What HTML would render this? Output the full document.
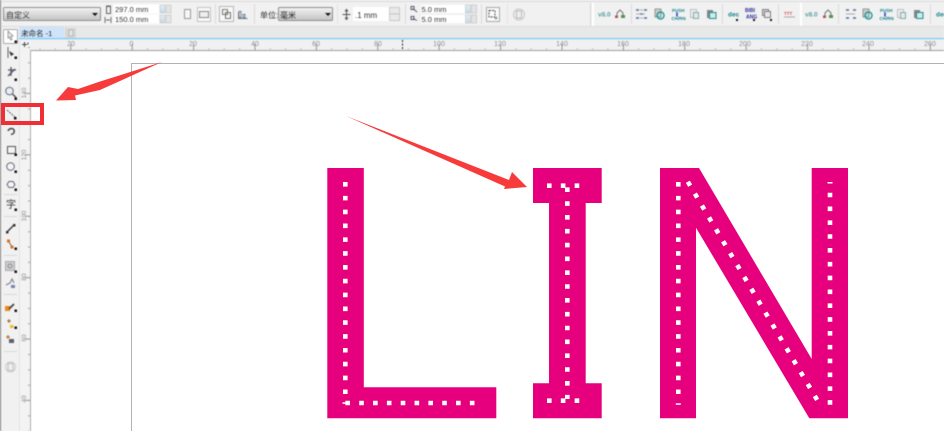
<!DOCTYPE html>
<html><head><meta charset="utf-8">
<style>
html,body{margin:0;padding:0;width:944px;height:431px;overflow:hidden;background:#fff}
svg{display:block;font-family:"Liberation Sans","Noto Sans CJK SC",sans-serif}
</style></head>
<body>
<svg width="944" height="431" viewBox="0 0 944 431" xmlns="http://www.w3.org/2000/svg">
<defs>
<linearGradient id="dd" x1="0" y1="0" x2="0" y2="1"><stop offset="0" stop-color="#f4f4f4"/><stop offset="1" stop-color="#c2c2c2"/></linearGradient>
<linearGradient id="sp" x1="0" y1="0" x2="0" y2="1"><stop offset="0" stop-color="#e6eef4"/><stop offset="1" stop-color="#c9d6df"/></linearGradient>
<filter id="soft" filterUnits="userSpaceOnUse" x="0" y="0" width="944" height="431" color-interpolation-filters="sRGB"><feGaussianBlur stdDeviation="0.4"/></filter>
</defs>

<!-- canvas -->
<rect width="944" height="431" fill="#fff"/>

<!-- top toolbar -->
<rect width="944" height="50" fill="#f1f1f1"/>
<rect y="0" width="19" height="431" fill="#f1f1f1"/>
<rect x="19" y="39" width="12" height="392" fill="#f3f3f3"/>

<g filter="url(#soft)">
<rect y="1" width="944" height="1" fill="#dcdcdc"/>
<rect y="26" width="944" height="1" fill="#dedede"/>

<rect x="3.500" y="7.500" width="97" height="13" rx="1" fill="url(#dd)" stroke="#8e8e8e"/>
<text x="6" y="18" font-size="8" fill="#333">自定义</text>
<path d="M92 13h6l-3 3z" fill="#111"/>

<!-- page size -->
<path d="M106.500 6.500h4v7h-4zM106 6h5" fill="none" stroke="#666"/>
<path d="M105 17v6M111 17v6M106 20h4" fill="none" stroke="#666" stroke-width=".9"/>
<rect x="113" y="4" width="58" height="20" fill="#f8f8f8"/>
<rect x="114" y="5" width="45" height="8" fill="#fff"/>
<rect x="114" y="15" width="45" height="8" fill="#fff"/>
<text x="115" y="12" font-size="7.500" fill="#333">297.0 mm</text>
<text x="115" y="22" font-size="7.500" fill="#333">150.0 mm</text>
<rect x="160" y="5" width="5" height="8" fill="url(#sp)" stroke="#b5c0c8" stroke-width=".5"/>
<rect x="166" y="5" width="5" height="8" fill="#e4e4e4" stroke="#b5b5b5" stroke-width=".5"/>
<rect x="160" y="15" width="5" height="8" fill="url(#sp)" stroke="#b5c0c8" stroke-width=".5"/>
<rect x="166" y="15" width="5" height="8" fill="#e4e4e4" stroke="#b5b5b5" stroke-width=".5"/>

<rect x="184.500" y="9.500" width="6" height="9" fill="#f6f6f6" stroke="#9a9a9a"/>
<rect x="197.500" y="7.500" width="13" height="14" fill="#f8f8f8" stroke="#c4c4c4"/>
<rect x="199.500" y="11.500" width="9" height="6" fill="#eee" stroke="#8a8a8a"/>
<rect x="215" y="4" width="1" height="20" fill="#dcdcdc"/>
<rect x="219.500" y="6.500" width="14" height="15" fill="#f8f8f8" stroke="#b8b8b8"/>
<path d="M222.500 9.500h5v5h-5zM225.500 12.500h5v6h-5z" fill="#f4f4f4" stroke="#555" stroke-width=".8"/>
<path d="M238.500 12v6.500h9M239 11.500h2v6h-2zM243 14.500h2v3h-2z" fill="none" stroke="#6a7a8a" stroke-width=".9"/>
<rect x="254" y="4" width="1" height="20" fill="#dcdcdc"/>
<text x="260" y="18" font-size="8" fill="#333">单位:</text>
<rect x="278.500" y="7.500" width="54" height="13" rx="1" fill="url(#dd)" stroke="#8e8e8e"/>
<text x="280" y="18" font-size="8" fill="#222">毫米</text>
<path d="M325 13h6l-3 3z" fill="#111"/>
<rect x="337" y="4" width="1" height="20" fill="#e4e4e4"/>

<!-- nudge -->
<path d="M346.500 10v9M342.500 14.500h8M345 11.500l1.500-2 1.500 2M345 17.500l1.500 2 1.500-2" fill="none" stroke="#555" stroke-width="1"/>
<rect x="353" y="7" width="37" height="14" fill="#fff"/>
<text x="355" y="18" font-size="8" fill="#333">.1 mm</text>
<rect x="389.500" y="7.500" width="10" height="6.500" fill="#e9e9e9" stroke="#bbb" stroke-width=".7"/>
<rect x="389.500" y="14" width="10" height="6.500" fill="#e9e9e9" stroke="#bbb" stroke-width=".7"/>
<rect x="405" y="4" width="1" height="20" fill="#dcdcdc"/>
<path d="M411 6.500h3v3h-3zM413 8.500l4 3.500M411 16.500h3v3h-3zM413 18.500l4 2" fill="none" stroke="#556" stroke-width=".9"/>
<rect x="421" y="5" width="44" height="8" fill="#fff"/>
<rect x="421" y="15" width="44" height="8" fill="#fff"/>
<text x="421.500" y="12" font-size="7.500" fill="#333">5.0 mm</text>
<text x="421.500" y="22" font-size="7.500" fill="#333">5.0 mm</text>
<rect x="465.500" y="5" width="5" height="8" fill="url(#sp)" stroke="#b5c0c8" stroke-width=".5"/>
<rect x="471.500" y="5" width="5" height="8" fill="#e4e4e4" stroke="#b5b5b5" stroke-width=".5"/>
<rect x="465.500" y="15" width="5" height="8" fill="url(#sp)" stroke="#b5c0c8" stroke-width=".5"/>
<rect x="471.500" y="15" width="5" height="8" fill="#e4e4e4" stroke="#b5b5b5" stroke-width=".5"/>
<rect x="481" y="4" width="1" height="20" fill="#dcdcdc"/>
<rect x="486.500" y="7.500" width="13" height="14" fill="#fafafa" stroke="#aaa"/>
<path d="M489 10.500h6v6.500h-6z" fill="none" stroke="#445" stroke-width=".9" stroke-dasharray="2 1"/>
<circle cx="496" cy="18" r="1.500" fill="#8aa"/>
<rect x="507" y="4" width="1" height="20" fill="#e4e4e4"/>
<circle cx="519" cy="14.500" r="5.500" fill="#eee" stroke="#c6c6c6"/>
<path d="M516.500 11h5v7h-5z" fill="none" stroke="#bbb"/>

<!-- macro icons -->
<rect x="592" y="3" width="2" height="23" fill="#fff"/>
<rect x="590" y="3" width="1" height="23" fill="#d8d8d8"/>
<text x="598" y="16.500" font-size="6.500" font-weight="bold" fill="#2f8f8c" opacity=".8">v8.0</text>
<path d="M617 17v-4l3-3 3 3v4" fill="none" stroke="#777"/><rect x="621" y="15" width="4" height="3" fill="#5a8f55"/><rect x="615" y="15.500" width="3" height="2.500" fill="#a55"/>
<rect x="631" y="4" width="1" height="20" fill="#dcdcdc"/>
<path d="M636 10h3M644 10h3M636 18h3M644 18h3M640 14h3" stroke="#4a6fa8" stroke-width="1.400"/><path d="M636 14h9M640 10h3M640 18h3" stroke="#999" stroke-width=".8"/>
<rect x="655" y="9" width="6" height="8" fill="#ccc" stroke="#777" stroke-width=".7"/><circle cx="660.500" cy="15.500" r="3.500" fill="none" stroke="#1d9b9b" stroke-width="1.400"/>
<text x="672" y="12" font-size="4.500" font-weight="bold" fill="#16858c">PUSH</text><path d="M677 12.500v4" stroke="#2040b8" stroke-width="1.500"/><text x="671.500" y="20" font-size="4.500" font-weight="bold" fill="#16858c">CH/RN</text>
<rect x="690.500" y="9.500" width="6" height="8" fill="#eee" stroke="#aaa" stroke-width=".7"/><rect x="693.500" y="12.500" width="5" height="6" fill="#dcecec" stroke="#5b9090" stroke-width=".7"/>
<path d="M707 10h6v8h-6z" fill="#888"/><rect x="709.500" y="12.500" width="6.500" height="6" fill="#cfeaea" stroke="#1d8f8f"/>
<rect x="722" y="4" width="1" height="20" fill="#dcdcdc"/>
<text x="728" y="16.500" font-size="6.500" font-weight="bold" fill="#16858c">dec</text><rect x="736" y="19" width="2" height="2" fill="#111"/>
<text x="745" y="12" font-size="5" font-weight="bold" fill="#2a2f9c">BIBI</text><text x="746" y="18.500" font-size="5" font-weight="bold" fill="#2a2f9c">ANG</text><rect x="753" y="19" width="2" height="2" fill="#111"/>
<rect x="762.500" y="9.500" width="6" height="6" fill="#ddd" stroke="#666" stroke-width=".8"/><rect x="764.500" y="11.500" width="6" height="6" fill="#e8e8e8" stroke="#666" stroke-width=".8"/><rect x="770" y="19" width="2" height="2" fill="#111"/>
<rect x="778" y="4" width="1" height="20" fill="#dcdcdc"/>
<text x="784" y="15" font-size="4.500" font-weight="bold" fill="#d84a4a">TTT</text><path d="M784 17h11" stroke="#aaa"/>
<rect x="800" y="3" width="2" height="23" fill="#fff"/>
<text x="805" y="16.500" font-size="6.500" font-weight="bold" fill="#2f8f8c" opacity=".8">v8.0</text>
<path d="M825 17v-4l3-3 3 3v4" fill="none" stroke="#777"/><rect x="829" y="15" width="4" height="3" fill="#5a8f55"/><rect x="823" y="15.500" width="3" height="2.500" fill="#a55"/>
<rect x="838" y="4" width="1" height="20" fill="#dcdcdc"/>
<path d="M846 10h3M853 10h3M846 18h3M853 18h3" stroke="#4a6fa8" stroke-width="1.400"/><path d="M846 14h9" stroke="#999" stroke-width=".8"/>
<rect x="863" y="9" width="6" height="8" fill="#ccc" stroke="#777" stroke-width=".7"/><circle cx="868.500" cy="15.500" r="3.500" fill="none" stroke="#1d9b9b" stroke-width="1.400"/>
<text x="880" y="12" font-size="4.500" font-weight="bold" fill="#16858c">PUSH</text><path d="M885 12.500v4" stroke="#2040b8" stroke-width="1.500"/><text x="879.500" y="20" font-size="4.500" font-weight="bold" fill="#16858c">CH/RN</text>
<rect x="897.500" y="9.500" width="6" height="8" fill="#eee" stroke="#aaa" stroke-width=".7"/><rect x="900.500" y="12.500" width="5" height="6" fill="#dcecec" stroke="#5b9090" stroke-width=".7"/>
<path d="M914 10h6v8h-6z" fill="#888"/><rect x="916.500" y="12.500" width="6.500" height="6" fill="#cfeaea" stroke="#1d8f8f"/>
<rect x="930" y="4" width="1" height="20" fill="#dcdcdc"/>
<text x="936" y="16.500" font-size="6.500" font-weight="bold" fill="#16858c">dec</text>

<!-- tab row -->
<rect x="19" y="27" width="925" height="11" fill="#e8e8e8"/>
<rect x="19" y="27" width="45" height="11" fill="#cfe4fa"/>
<text x="21" y="36" font-size="7.500" fill="#222">未命名 -1</text>
<rect x="65" y="28" width="11" height="10" fill="#d6d6d6"/>
<rect x="69" y="30" width="4" height="6" fill="#e6e6e6" stroke="#aaa" stroke-width=".7"/>
<rect x="19" y="38" width="925" height="1.300" fill="#7fcdf6"/>

<!-- horizontal ruler -->
<rect x="31" y="50" width="913" height="1" fill="#9b9b9b"/>
<line x1="39.500" y1="49" x2="944" y2="49" stroke="#a5a5a5" stroke-dasharray="1 14.350"/>
<line x1="70.300" y1="47" x2="944" y2="47" stroke="#999" stroke-width="6" stroke-dasharray="1 60.400"/>
<g font-size="7" fill="#8f8f8f" text-anchor="middle">
<text x="71" y="46">20</text><text x="131.500" y="46">0</text><text x="193" y="46">20</text><text x="255" y="46">40</text><text x="316" y="46">60</text><text x="378" y="46">80</text><text x="439" y="46">100</text><text x="500" y="46">120</text><text x="562" y="46">140</text><text x="623" y="46">160</text><text x="684" y="46">180</text><text x="745" y="46">200</text><text x="807" y="46">220</text><text x="868" y="46">240</text><text x="930" y="46">260</text>
</g>
<line x1="402.500" y1="40" x2="402.500" y2="50" stroke="#222" stroke-dasharray="2 1.500"/>
<path d="M24.500 42v5M22 44.500h5M28 42.500v2" stroke="#444" stroke-width="1" fill="none"/>

<!-- left toolbar + vertical ruler -->
<rect x="0" y="0" width="1" height="431" fill="#7c7c7c"/>
<rect x="19" y="39" width="1" height="392" fill="#e2e2e2"/>
<rect x="30" y="50" width="1" height="381" fill="#b0b0b0"/>
<line x1="29" y1="47" x2="29" y2="431" stroke="#a5a5a5" stroke-width="2" stroke-dasharray="1 14.350"/>
<line x1="27.500" y1="31.500" x2="27.500" y2="431" stroke="#999" stroke-width="5" stroke-dasharray="1 60.400"/>
<g font-size="6.500" fill="#8f8f8f" text-anchor="middle">
<text transform="translate(26 93) rotate(-90)">140</text>
<text transform="translate(26 155) rotate(-90)">120</text>
<text transform="translate(26 216) rotate(-90)">100</text>
<text transform="translate(26 277) rotate(-90)">80</text>
<text transform="translate(26 338) rotate(-90)">60</text>
<text transform="translate(26 399) rotate(-90)">40</text>
</g>

<!-- left tool icons -->
<rect x="3.500" y="29.500" width="14" height="14" rx="1" fill="#fff" stroke="#a8a8a8"/>
<path d="M8 31l5 5-2 .5 1 3-1.500.5-1-3-1.500 1z" fill="#e8eef4" stroke="#888" stroke-width=".8"/>
<rect x="14.500" y="40.500" width="2.500" height="2.500" fill="#111"/>
<path d="M8 47v11" stroke="#667" stroke-width="1"/><path d="M9 51l5 3-3 2z" fill="#333"/><rect x="14.500" y="56.500" width="2.500" height="2.500" fill="#111"/>
<path d="M8 70h8M11 67v9M8 76l7-7" stroke="#556" stroke-width="1.300" fill="none"/><rect x="14.500" y="78.500" width="2.500" height="2.500" fill="#111"/>
<circle cx="9.500" cy="91" r="3.800" fill="#e6edf3" stroke="#667"/><path d="M12.500 94l3.500 3.500" stroke="#555" stroke-width="1.500"/><rect x="14.500" y="97.500" width="2.500" height="2.500" fill="#111"/>
<path d="M7 110l9 8" stroke="#666" stroke-dasharray="2 1" stroke-width="1"/><rect x="14" y="117" width="2.500" height="2.500" fill="#111"/>
<path d="M8 131c1-3 5-3 6-1s-1 5-3 4" fill="none" stroke="#444" stroke-width="1.400"/>
<rect x="7.500" y="146.500" width="8" height="7" fill="#f2f4f8" stroke="#555"/><rect x="14.500" y="153.500" width="2.500" height="2.500" fill="#111"/>
<circle cx="10.500" cy="166.500" r="3.800" fill="#f2f4f8" stroke="#667"/><rect x="14.500" y="170.500" width="2.500" height="2.500" fill="#111"/>
<path d="M7 184.500l2-3h4l2 3-2 3H9z" fill="#f2f4f8" stroke="#667"/><rect x="14.500" y="188.500" width="2.500" height="2.500" fill="#111"/>
<rect x="4" y="194" width="13" height="1" fill="#d8d8d8"/>
<text x="6" y="208" font-size="10" fill="#333">字</text><rect x="14.500" y="208.500" width="2.500" height="2.500" fill="#111"/>
<rect x="4" y="216" width="13" height="1" fill="#d8d8d8"/>
<path d="M7 232l7-7" stroke="#333" stroke-width="1.300"/><rect x="6" y="231" width="2.500" height="2.500" fill="#333"/><rect x="13" y="224" width="2.500" height="2.500" fill="#333"/>
<path d="M9 242l3 5" stroke="#667"/><rect x="7" y="239.500" width="3" height="3" fill="#e0701c"/><rect x="10.500" y="245.500" width="3" height="3" fill="#e0701c"/><rect x="14.500" y="247.500" width="2.500" height="2.500" fill="#111"/>
<rect x="4" y="255" width="13" height="1" fill="#d8d8d8"/>
<rect x="5.500" y="261.500" width="9" height="9" fill="#cfcfd4" stroke="#aaa"/><circle cx="10" cy="266" r="2" fill="none" stroke="#888"/><rect x="14.500" y="270.500" width="2.500" height="2.500" fill="#111"/>
<path d="M6 285l4-2 2-4 2 4" fill="none" stroke="#778" stroke-width="1"/><rect x="11" y="285" width="4" height="3" fill="#7a83a6"/>
<rect x="4" y="294" width="13" height="1" fill="#d8d8d8"/>
<rect x="5" y="306" width="5" height="5" fill="#ee8a1a"/><path d="M9 309l5-5" stroke="#444" stroke-width="1.800"/><rect x="14.500" y="309.500" width="2.500" height="2.500" fill="#111"/>
<path d="M7 321l2-2 2 2-2 2z" fill="#a87a4a"/><rect x="10" y="325" width="3.500" height="3" fill="#f2bb2c"/><rect x="14.500" y="326.500" width="2.500" height="2.500" fill="#111"/>
<path d="M6 337l2-2 2 2-2 2z" fill="#c07c3a"/><rect x="9" y="339" width="5" height="4" fill="#5f5f6f"/>
<rect x="4" y="351" width="13" height="1" fill="#d8d8d8"/>
<circle cx="10.500" cy="367" r="5" fill="#eee" stroke="#cacaca"/><path d="M8 363.500h5v7h-5z" fill="none" stroke="#c0c0c0"/>
</g>

<!-- page border -->
<path d="M131.500 431V63.500H944" fill="none" stroke="#b2b2b2"/>

<!-- letters -->
<g fill="#e6007e">
<path d="M327.300 168H363.800V387.300H496.300V418.300H327.300z"/>
<path d="M533 168H601.700V203H585.700V383.300H601.700V418.300H533V383.300H549V203H533z"/>
<path d="M660 168H699L811.700 359V168H848V418.300H809.300L696 227.700V418.300H660z"/>
</g>
<g stroke="#fff" stroke-width="4.600" fill="none" stroke-dasharray="4.600 9.230">
<line x1="345.300" y1="182" x2="345.300" y2="394"/>
<line x1="345.400" y1="403" x2="475" y2="403"/>
<line x1="678.300" y1="182" x2="678.300" y2="394"/>
<line x1="830" y1="192.700" x2="830" y2="405"/>
<line x1="687.850" y1="181.760" x2="817.500" y2="400.500"/>
<line x1="567.300" y1="187.400" x2="567.300" y2="399"/>
<line x1="547" y1="185.700" x2="580" y2="185.700"/>
<line x1="547" y1="400.700" x2="580" y2="400.700"/>
</g>
<g fill="#fff">
<rect x="342.500" y="402.300" width="3" height="1.500"/>
<rect x="675.800" y="403.300" width="5" height="1.500"/>
<rect x="827.500" y="182" width="5" height="1.500"/>
</g>

<!-- annotations -->
<g fill="#f73a3a">
<path d="M162 62L100 81.500 78 89 68 87 56 100.500 76 100 75 95.500 100 90z"/>
<path d="M346 116L509 180 512 172 527 187 504 189 505 186.500z"/>
</g>
<path d="M3 105H42V123H3z" fill="none" stroke="#ef2f35" stroke-width="4"/>
</svg>
</body></html>
